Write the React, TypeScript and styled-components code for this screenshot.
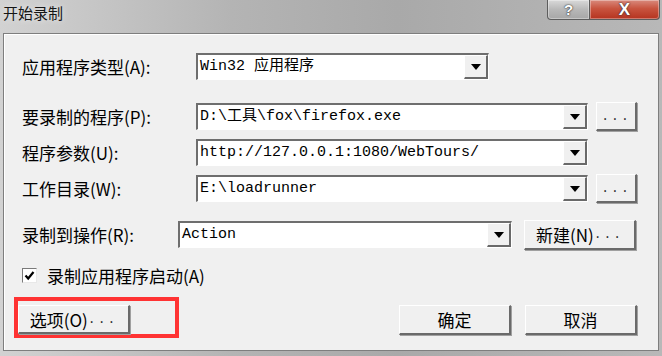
import styled, { createGlobalStyle } from "styled-components";

const GlobalStyle = createGlobalStyle`
  html, body {
    margin: 0;
    padding: 0;
    background: #c4c4c4;
  }
  #root {
    width: 662px;
    height: 356px;
    overflow: hidden;
  }
`;

const Window = styled.div`
  width: 662px;
  height: 356px;
  display: flex;
  flex-direction: column;
  background: linear-gradient(90deg, #d2d2d2 0%, #b4b4b4 35%, #a9a9a9 60%, #b8b8b8 100%);
  font-family: "Noto Sans CJK SC", "Liberation Sans", sans-serif;
  color: #000;
`;

const TitleBar = styled.div`
  height: 33px;
  flex: none;
  display: flex;
  justify-content: space-between;
  align-items: flex-start;
  padding-left: 3px;
  box-sizing: border-box;
`;

const Title = styled.div`
  font-size: 15px;
  line-height: 26px;
  color: #151515;
  text-shadow: 0 0 6px rgba(255, 255, 255, 0.7);
`;

const Caption = styled.div`
  display: flex;
  margin-right: 2px;
`;

const CaptionButton = styled.div<{ $close?: boolean }>`
  height: 20px;
  width: ${({ $close }) => ($close ? "70px" : "43px")};
  box-sizing: border-box;
  border: 1px solid #5d5d5d;
  border-top: none;
  border-left: ${({ $close }) => ($close ? "none" : "1px solid #5d5d5d")};
  border-radius: ${({ $close }) => ($close ? "0 0 4px 0" : "0 0 0 4px")};
  background: ${({ $close }) =>
    $close
      ? "linear-gradient(180deg, #d98a7d 0%, #c8543f 45%, #b5331f 100%)"
      : "linear-gradient(180deg, #d9d9d9 0%, #b8b8b8 50%, #a7a7a7 100%)"};
  box-shadow: inset 0 0 0 1px rgba(255, 255, 255, 0.35);
  display: flex;
  align-items: center;
  justify-content: center;
  color: #fff;
  font-family: "Liberation Sans", sans-serif;
  font-weight: bold;
  font-size: ${({ $close }) => ($close ? "17px" : "15px")};
  line-height: 1;
  text-shadow: 0 0 1px #333, 0 0 2px #333;
`;

const Body = styled.div`
  flex: 1;
  margin: 0 3px 5px 3px;
  border: 1px solid #7e7e7e;
  box-shadow: inset 1px 1px 0 #fff;
  background: #f0f0f0;
  padding: 19px 21px 0 18px;
  display: flex;
  flex-direction: column;
`;

const Row = styled.div<{ $gap: number }>`
  display: flex;
  align-items: center;
  height: 27px;
  margin-top: ${({ $gap }) => $gap}px;
`;

const Label = styled.div<{ $width: number }>`
  width: ${({ $width }) => $width}px;
  flex: none;
  font-size: 17px;
  white-space: nowrap;
`;

const Combo = styled.div<{ $width: number }>`
  width: ${({ $width }) => $width}px;
  height: 27px;
  box-sizing: border-box;
  display: flex;
  background: #fff;
  border-style: solid;
  border-width: 2px 1px 1px 2px;
  border-color: #6e6e6e #ffffff #ffffff #6e6e6e;
`;

const ComboText = styled.div`
  flex: 1;
  padding-left: 2px;
  font-family: "Liberation Mono", "Noto Sans CJK SC", monospace;
  font-size: 15px;
  line-height: 24px;
  white-space: nowrap;
  overflow: hidden;
`;

const ArrowButton = styled.div`
  width: 24px;
  flex: none;
  box-sizing: border-box;
  background: #f0f0f0;
  border-style: solid;
  border-width: 1px 2px 2px 1px;
  border-color: #ffffff #696969 #696969 #ffffff;
  display: flex;
  align-items: center;
  justify-content: center;
`;

const Arrow = styled.div`
  width: 0;
  height: 0;
  border-left: 5px solid transparent;
  border-right: 5px solid transparent;
  border-top: 6px solid #000;
`;

const PushButton = styled.div<{ $width: number; $height?: number; $gap?: number }>`
  width: ${({ $width }) => $width}px;
  height: ${({ $height }) => $height ?? 30}px;
  margin-left: ${({ $gap }) => $gap ?? 0}px;
  flex: none;
  box-sizing: border-box;
  background: #f0f0f0;
  border-style: solid;
  border-width: 1px 2px 2px 1px;
  border-color: #ffffff #6a6a6a #6a6a6a #ffffff;
  box-shadow: 1px 1px 0 #a0a0a0;
  display: flex;
  align-items: center;
  justify-content: center;
  font-size: 17px;
  white-space: nowrap;
`;

const Dots = styled.span`
  font-family: "Liberation Mono", monospace;
  font-size: 13px;
  letter-spacing: 2px;
  color: #333;
`;

const CheckRow = styled.div`
  display: flex;
  align-items: center;
  height: 16px;
  margin-top: 19px;
  gap: 10px;
`;

const CheckBox = styled.div`
  width: 15px;
  height: 15px;
  box-sizing: border-box;
  background: #fff;
  border-style: solid;
  border-width: 1px;
  border-color: #7a7a7a #e8e8e8 #e8e8e8 #7a7a7a;
  display: flex;
  align-items: center;
  justify-content: center;
`;

const CheckText = styled.div`
  font-size: 17px;
  white-space: nowrap;
`;

const BottomRow = styled.div`
  display: flex;
  align-items: flex-start;
  margin-top: 14px;
`;

const Highlight = styled.div`
  width: 165px;
  height: 41px;
  box-sizing: border-box;
  margin-left: -8px;
  border: 4px solid #ff3333;
  padding-top: 4px;
  flex: none;
`;

const Spacer = styled.div`
  flex: 1;
`;

const ButtonGroup = styled.div`
  display: flex;
  margin-top: 8px;
`;

export default function App() {
  return (
    <>
      <GlobalStyle />
      <Window>
        <TitleBar>
          <Title>开始录制</Title>
          <Caption>
            <CaptionButton>?</CaptionButton>
            <CaptionButton $close>X</CaptionButton>
          </Caption>
        </TitleBar>
        <Body>
          <Row $gap={0}>
            <Label $width={174}>应用程序类型(A):</Label>
            <Combo $width={293}>
              <ComboText>Win32 应用程序</ComboText>
              <ArrowButton>
                <Arrow />
              </ArrowButton>
            </Combo>
          </Row>

          <Row $gap={23}>
            <Label $width={174}>要录制的程序(P):</Label>
            <Combo $width={392}>
              <ComboText>D:\工具\fox\firefox.exe</ComboText>
              <ArrowButton>
                <Arrow />
              </ArrowButton>
            </Combo>
            <PushButton $width={41} $height={29} $gap={8}>
              <Dots>...</Dots>
            </PushButton>
          </Row>

          <Row $gap={9}>
            <Label $width={174}>程序参数(U):</Label>
            <Combo $width={392}>
              <ComboText>http://127.0.0.1:1080/WebTours/</ComboText>
              <ArrowButton>
                <Arrow />
              </ArrowButton>
            </Combo>
          </Row>

          <Row $gap={9}>
            <Label $width={174}>工作目录(W):</Label>
            <Combo $width={392}>
              <ComboText>E:\loadrunner</ComboText>
              <ArrowButton>
                <Arrow />
              </ArrowButton>
            </Combo>
            <PushButton $width={41} $height={29} $gap={8}>
              <Dots>...</Dots>
            </PushButton>
          </Row>

          <Row $gap={19}>
            <Label $width={156}>录制到操作(R):</Label>
            <Combo $width={334}>
              <ComboText>Action</ComboText>
              <ArrowButton>
                <Arrow />
              </ArrowButton>
            </Combo>
            <PushButton $width={112} $gap={12}>
              新建(N)<Dots>...</Dots>
            </PushButton>
          </Row>

          <CheckRow>
            <CheckBox>
              <svg width="11" height="11" viewBox="0 0 11 11">
                <path d="M1.5 5.5 L4.2 8.5 L9.5 2" fill="none" stroke="#000" strokeWidth="2.2" />
              </svg>
            </CheckBox>
            <CheckText>录制应用程序启动(A)</CheckText>
          </CheckRow>

          <BottomRow>
            <Highlight>
              <PushButton $width={112} $height={29}>
                选项(O)<Dots>...</Dots>
              </PushButton>
            </Highlight>
            <Spacer />
            <ButtonGroup>
              <PushButton $width={112}>确定</PushButton>
              <PushButton $width={112} $gap={14}>
                取消
              </PushButton>
            </ButtonGroup>
          </BottomRow>
        </Body>
      </Window>
    </>
  );
}
